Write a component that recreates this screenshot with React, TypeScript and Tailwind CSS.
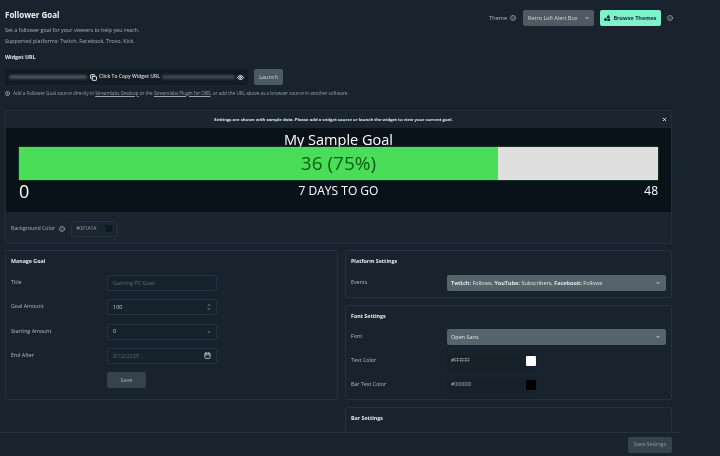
import { Calendar, ChevronDown, ChevronUp, Copy, Eye, Info, X } from "lucide-react";
import { FaShapes } from "react-icons/fa";
import type { ReactNode } from "react";

function Card({ title, className, children }: { title: string; className: string; children?: ReactNode }) {
  return (
    <section className={`rounded-[2px] border border-[#24323d] px-[5px] pt-[6px] ${className}`}>
      <h3 className="text-[5.3px] font-bold leading-[8px] text-[#e6eaec]">{title}</h3>
      {children}
    </section>
  );
}

function Row({ label, children }: { label: string; children: ReactNode }) {
  return (
    <div className="flex h-4 items-center">
      <span className="w-[96px] text-[5.3px] text-[#b4bcc2]">{label}</span>
      {children}
    </div>
  );
}

function TextBox({ value, muted, children }: { value: string; muted?: boolean; children?: ReactNode }) {
  return (
    <div className="flex h-4 w-[110px] items-center justify-between rounded-[2px] border border-[#24323d] bg-[#17232c] px-[5px]">
      <span className={`text-[5.5px] ${muted ? "text-[#5c6a74]" : "text-[#c4cbd0]"}`}>{value}</span>
      {children}
    </div>
  );
}

function Picker({ children }: { children: ReactNode }) {
  return (
    <div className="flex h-4 w-[219px] items-center justify-between rounded-[2px] bg-[#55636b] pl-1 pr-[6px]">
      <span className="text-[5.5px] text-[#e1e5e7]">{children}</span>
      <ChevronDown size={4} strokeWidth={5} className="text-white" />
    </div>
  );
}

function ColorInput({ value, swatch }: { value: string; swatch: string }) {
  return (
    <div className="flex h-4 w-[91px] items-center justify-between rounded-[2px] bg-[#16212a] pl-1 pr-[2px]">
      <span className="text-[5px] text-[#aeb6bc]">{value}</span>
      <span className={`size-[10px] rounded-[1px] ${swatch}`} />
    </div>
  );
}

export default function App() {
  return (
    <div
      className="h-[456px] w-[720px] overflow-hidden bg-[#18232d] blur-[0.5px]"
      style={{ fontFamily: '"Open Sans", sans-serif' }}
    >
      <div className="h-[433px] w-[680px] overflow-hidden border-b border-[#24323d]">
        <main className="ml-[5px] w-[667px] pt-[10px]">
          <header className="flex w-[668px] justify-between">
            <div>
              <h1 className="text-[8px] font-bold leading-[10px] text-[#eef1f2]">Follower Goal</h1>
              <p className="mt-[5px] text-[5.4px] leading-[11px] text-[#aab3b9]">
                Set a follower goal for your viewers to help you reach.
                <br />
                Supported platforms: Twitch, Facebook, Trovo, Kick.
              </p>
            </div>
            <div className="flex h-4 items-center">
              <span className="text-[5.5px] text-[#b4bcc2]">Theme</span>
              <Info size={6} strokeWidth={3} className="ml-[3px] text-[#a5aeb4]" />
              <div className="ml-[7px] flex h-4 w-[71px] items-center justify-between rounded-[2px] bg-[#4f5a62] px-[5px]">
                <span className="text-[5.5px] text-[#d5dadd]">Retro Lofi Alert Box</span>
                <ChevronDown size={4} strokeWidth={5} className="text-white" />
              </div>
              <div className="ml-[6px] flex h-4 w-[61px] items-center justify-center gap-[3px] rounded-[2px] bg-[#7df2cb] text-[#10302a]">
                <FaShapes size={6} />
                <span className="text-[5.5px] font-bold">Browse Themes</span>
              </div>
              <Info size={6} strokeWidth={3} className="ml-[6px] text-[#a5aeb4]" />
            </div>
          </header>

          <h2 className="mt-[6px] text-[5.3px] font-bold leading-[8px] text-[#e6eaec]">Widget URL</h2>
          <div className="mt-[8px] flex gap-[6px]">
            <div className="flex h-4 w-[243px] items-center rounded-[2px] bg-[#131c24] px-[4px]">
              <span className="h-[4px] w-[78px] rounded-full bg-[#47525a] blur-[1px]" />
              <Copy size={7} strokeWidth={3} className="ml-[3px] text-white" />
              <span className="ml-[2px] text-[5px] font-semibold text-[#d6dbde]">Click To Copy Widget URL</span>
              <span className="ml-[2px] h-[4px] flex-1 rounded-full bg-[#3d4850] blur-[1px]" />
              <Eye size={7} strokeWidth={3} className="ml-[2px] text-white" />
            </div>
            <button className="h-4 w-[29px] rounded-[2px] bg-[#4b5961] text-[5.5px] text-[#d0d6d9]">Launch</button>
          </div>
          <div className="mt-[4px] flex h-[8px] items-center gap-[3px] whitespace-nowrap text-[4.64px] text-[#98a2a9]">
            <Info size={5} strokeWidth={3} className="text-[#c4cacd]" />
            <span>
              Add a Follower Goal source directly in <u>Streamlabs Desktop</u> or the <u>Streamlabs Plugin for OBS</u>, or add the URL above as a browser source in another software.
            </span>
          </div>

          <section className="mt-[13px] h-[134px] rounded-[2px] border border-[#222f3a] bg-[#1a2530]">
            <div className="relative flex h-[17px] items-center justify-center pr-[10px] text-[4.25px] font-bold text-[#e4e8ea]">
              Settings are shown with sample data. Please add a widget source or launch the widget to view your current goal.
              <X size={5} strokeWidth={4} className="absolute right-[4px] text-white" />
            </div>
            <div className="flex h-[84px] flex-col bg-[#0a1219] px-[13px] text-white">
              <div className="h-[19px] pt-[2px] text-center text-[14.5px] leading-[19px]">My Sample Goal</div>
              <div className="relative flex h-[33px] bg-[#dfdfdf] shadow-[0_0_2px_#1c7a2c]">
                <div className="w-[75%] bg-[#4ade58]" />
                <span className="absolute inset-0 flex items-center justify-center text-[19px] text-[#0f5a14]">36 (75%)</span>
              </div>
              <div className="grid grid-cols-3 items-center pt-[1px]">
                <span className="text-[18px] leading-[20px]">0</span>
                <span className="text-center text-[12px]">7 DAYS TO GO</span>
                <span className="text-right text-[12px]">48</span>
              </div>
            </div>
            <div className="flex h-[33px] items-center pl-[5px]">
              <span className="text-[5.3px] text-[#aab3b9]">Background Color</span>
              <Info size={6} strokeWidth={3} className="ml-[4px] text-[#a5aeb4]" />
              <div className="ml-[6px] flex h-[16px] w-[46px] items-center justify-between rounded-[2px] border border-[#24323d] px-1">
                <span className="text-[4.8px] text-[#9aa4aa]">#091A1A</span>
                <span className="size-[7px] rounded-[1px] bg-[#0a1a20]" />
              </div>
            </div>
          </section>

          <div className="mt-[6px] flex gap-[7px]">
            <Card title="Manage Goal" className="h-[150px] w-[333px]">
              <div className="mt-[10px] flex flex-col gap-[8.3px]">
                <Row label="Title"><TextBox value="Gaming PC Goal" muted /></Row>
                <Row label="Goal Amount">
                  <TextBox value="100">
                    <span className="flex flex-col text-[#aab3b9]">
                      <ChevronUp size={4} strokeWidth={4} />
                      <ChevronDown size={4} strokeWidth={4} />
                    </span>
                  </TextBox>
                </Row>
                <Row label="Starting Amount">
                  <TextBox value="0">
                    <ChevronUp size={4} strokeWidth={4} className="text-[#aab3b9]" />
                  </TextBox>
                </Row>
                <Row label="End After">
                  <TextBox value="8/12/2025" muted>
                    <Calendar size={7} strokeWidth={2.5} className="text-[#d5dadd]" />
                  </TextBox>
                </Row>
                <div className="flex pl-[96px]">
                  <button className="h-4 w-[39px] rounded-[2px] bg-[#36434c] text-[5.5px] text-[#aab3b9]">Save</button>
                </div>
              </div>
            </Card>
            <div className="flex w-[327px] flex-col gap-[7px]">
              <Card title="Platform Settings" className="h-[48px]">
                <div className="mt-[10px]">
                  <Row label="Events">
                    <Picker>
                      <b>Twitch:</b> Follows, <b>YouTube:</b> Subscribers, <b>Facebook:</b> Follows
                    </Picker>
                  </Row>
                </div>
              </Card>
              <Card title="Font Settings" className="h-[95px]">
                <div className="mt-[9px] flex flex-col gap-2">
                  <Row label="Font"><Picker>Open Sans</Picker></Row>
                  <Row label="Text Color"><ColorInput value="#FFFFFF" swatch="bg-white" /></Row>
                  <Row label="Bar Text Color"><ColorInput value="#000000" swatch="bg-black" /></Row>
                </div>
              </Card>
              <Card title="Bar Settings" className="h-[60px]" />
            </div>
          </div>
        </main>
      </div>
      <footer className="flex h-[23px] w-[680px] items-center justify-end pr-[8px]">
        <button className="h-4 w-[44px] rounded-[2px] bg-[#36434c] text-[5.2px] text-[#8f9aa1]">Save Settings</button>
      </footer>
    </div>
  );
}
